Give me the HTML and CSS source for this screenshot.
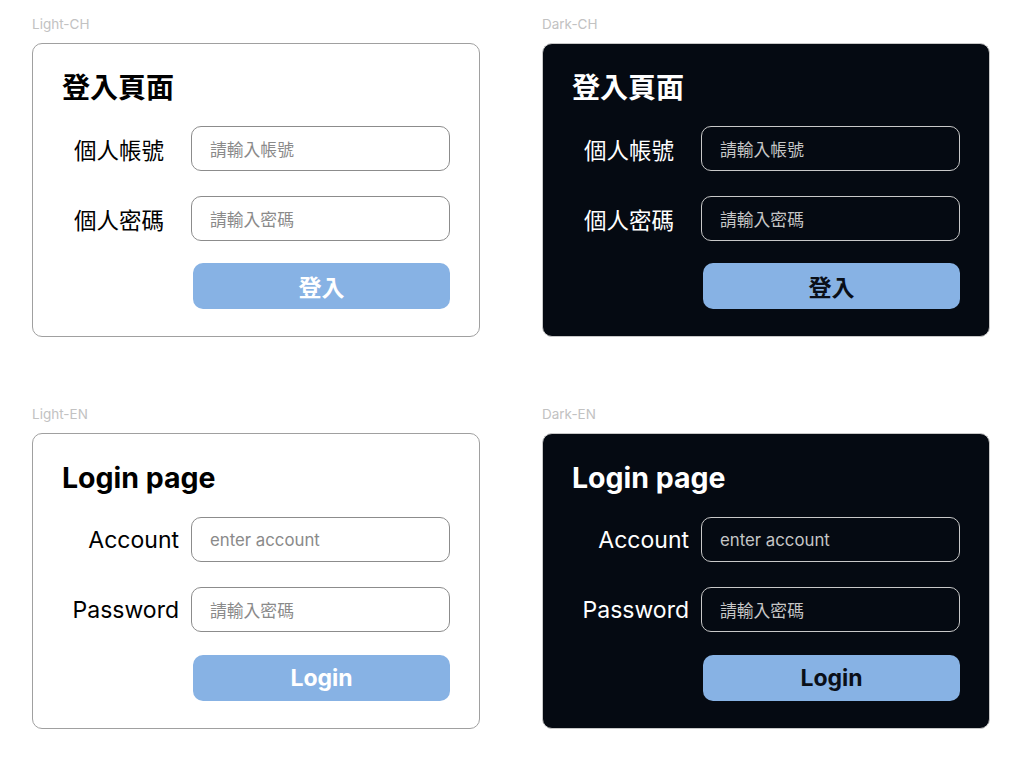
FILE: index.html
```html
<!DOCTYPE html>
<html lang="zh-Hant">
<head>
  <meta charset="UTF-8">
  <meta name="viewport" content="width=device-width, initial-scale=1.0">
  <link rel="stylesheet" href="styles.css">
</head>
<body>
  <div class="board">
    <div class="frame">
      <div class="frame-name">Light-CH</div>
      <div class="card light ch">
        <h1 class="title">登入頁面</h1>
        <div class="form">
          <label class="label">個人帳號</label>
          <div class="field"><span class="placeholder">請輸入帳號</span></div>
          <label class="label">個人密碼</label>
          <div class="field"><span class="placeholder">請輸入密碼</span></div>
          <button class="btn">登入</button>
        </div>
      </div>
    </div>

    <div class="frame">
      <div class="frame-name">Dark-CH</div>
      <div class="card dark ch">
        <h1 class="title">登入頁面</h1>
        <div class="form">
          <label class="label">個人帳號</label>
          <div class="field"><span class="placeholder">請輸入帳號</span></div>
          <label class="label">個人密碼</label>
          <div class="field"><span class="placeholder">請輸入密碼</span></div>
          <button class="btn">登入</button>
        </div>
      </div>
    </div>

    <div class="frame">
      <div class="frame-name">Light-EN</div>
      <div class="card light en">
        <h1 class="title">Login page</h1>
        <div class="form">
          <label class="label">Account</label>
          <div class="field"><span class="placeholder">enter account</span></div>
          <label class="label">Password</label>
          <div class="field"><span class="placeholder">請輸入密碼</span></div>
          <button class="btn">Login</button>
        </div>
      </div>
    </div>

    <div class="frame">
      <div class="frame-name">Dark-EN</div>
      <div class="card dark en">
        <h1 class="title">Login page</h1>
        <div class="form">
          <label class="label">Account</label>
          <div class="field"><span class="placeholder">enter account</span></div>
          <label class="label">Password</label>
          <div class="field"><span class="placeholder">請輸入密碼</span></div>
          <button class="btn">Login</button>
        </div>
      </div>
    </div>
  </div>
</body>
</html>
```

FILE: styles.css
```css
body {
  margin: 0;
  padding: 16px 32px;
  background-color: #ffffff;
  font-family: "Inter", "Noto Sans CJK TC", sans-serif;
}
.board {
  display: grid;
  grid-template-columns: 448px 448px;
  column-gap: 62px;
  row-gap: 69px;
}
.frame-name {
  font-size: 13.5px;
  line-height: 16px;
  color: #c2c2c2;
  margin-bottom: 11px;
}
.card {
  border: 1px solid #a0a0a0;
  border-radius: 10px;
  padding: 30px 29px 27px 29px;
}
.card.dark {
  background-color: #050a12;
  border-color: #c8c8c8;
  color: #ffffff;
}
.title {
  margin: 0 0 24px 0;
  font-size: 28px;
  line-height: 28px;
  font-weight: 700;
}
.en .title {
  font-size: 28.5px;
  margin-bottom: 25px;
}
.form {
  display: grid;
  grid-template-columns: 117px 1fr;
  column-gap: 12px;
  row-gap: 25px;
  align-items: center;
}
.label {
  font-size: 23px;
  text-align: right;
}
.ch .label {
  font-size: 22.5px;
  padding-right: 15px;
}
.field {
  height: 45px;
  box-sizing: border-box;
  border: 1px solid #8c8c8c;
  border-radius: 10px;
  padding-left: 18px;
  display: flex;
  align-items: center;
}
.dark .field {
  border-color: #c8c8c8;
}
.placeholder {
  font-size: 16.4px;
  color: #8a8a8a;
}
.ch .placeholder,
.placeholder:lang(zh-Hant) {
  font-size: 16.8px;
}
.dark .placeholder {
  color: #c6c6c6;
}
.btn {
  grid-column: 2;
  margin: -3px 0 0 2px;
  height: 46px;
  border: none;
  border-radius: 10px;
  background-color: #87b2e4;
  color: #ffffff;
  font-family: inherit;
  font-size: 23px;
  font-weight: 700;
}
.en .btn {
  margin-top: -2px;
}
.dark .btn {
  color: #0a0f18;
}
```
